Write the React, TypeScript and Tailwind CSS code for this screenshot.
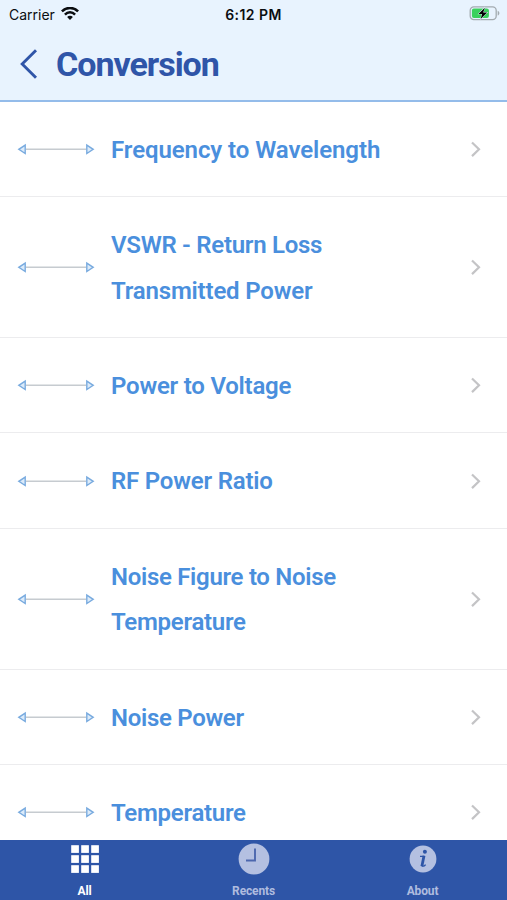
import React from 'react';

type ConversionItem = {
  lines: { text: string; tracking: string }[];
};

const items: ConversionItem[] = [
  { lines: [{ text: 'Frequency to Wavelength', tracking: 'tracking-[-0.08px]' }] },
  {
    lines: [
      { text: 'VSWR - Return Loss', tracking: 'tracking-[-0.28px]' },
      { text: 'Transmitted Power', tracking: 'tracking-[-0.18px]' }
    ]
  },
  { lines: [{ text: 'Power to Voltage', tracking: 'tracking-[-0.22px]' }] },
  { lines: [{ text: 'RF Power Ratio', tracking: 'tracking-[-0.2px]' }] },
  {
    lines: [
      { text: 'Noise Figure to Noise', tracking: 'tracking-[-0.3px]' },
      { text: 'Temperature', tracking: 'tracking-[-0.28px]' }
    ]
  },
  { lines: [{ text: 'Noise Power', tracking: 'tracking-[-0.3px]' }] },
  { lines: [{ text: 'Temperature', tracking: 'tracking-[-0.28px]' }] }
];

const WifiIcon = () => (
  <svg width="18" height="14" viewBox="0 0 18 14" fill="none" stroke="#0b0d10" strokeWidth="2.5">
    <path d="M.9 4.4C5.4 -.2 12.6 -.2 17.1 4.4" />
    <path d="M3.9 7.6C6.8 4.6 11.2 4.6 14.1 7.6" />
    <path d="M9 12.9L6.1 10C7.7 8.4 10.3 8.4 11.9 10Z" fill="#0b0d10" stroke="none" />
  </svg>
);

const BatteryIcon = () => (
  <svg width="31" height="15" viewBox="0 0 31 15" fill="none">
    <rect x="1.2" y=".8" width="26" height="12.8" rx="3.6" stroke="#a3abb0" strokeWidth="1.3" />
    <path d="M28.7 4.8v4.8c2.2-.7 2.2-4.1 0-4.8Z" fill="#a3abb0" />
    <rect x="2.9" y="2.4" width="17" height="9.6" rx="2" fill="#3ad15c" />
    <path d="M16 .6L8.6 8.2h4l-1.6 5.9 8.2-8h-4.3Z" fill="#e8f3fe" />
    <path d="M15.8 1.8L9.4 7.9h3.7l-1.5 5.1 6.6-6.6h-4Z" fill="#000" />
  </svg>
);

const ArrowIcon = () => (
  <svg className="shrink-0" width="78" height="12" viewBox="0 0 78 12" fill="none">
    <path d="M9 6.3H69" stroke="#c6cbd0" strokeWidth="1.5" />
    <path d="M8.2 2.1V10.5L1.8 6.3Z" fill="#dcebfa" stroke="#79abdf" strokeWidth="1.4" />
    <path d="M69.8 2.1V10.5L76.2 6.3Z" fill="#dcebfa" stroke="#79abdf" strokeWidth="1.4" />
  </svg>
);

const tabs = [
  {
    name: 'All',
    color: 'text-white',
    icon: (
      <svg width="28" height="28" viewBox="0 0 28 28" fill="#fff">
        {[0, 10, 20].map(y =>
          [0, 10, 20].map(x => <rect key={`${x}-${y}`} x={x + 0.2} y={y + 0.2} width="7.7" height="7.7" />)
        )}
      </svg>
    )
  },
  {
    name: 'Recents',
    color: 'text-[#afbcdf]',
    icon: (
      <svg width="32" height="32" viewBox="0 0 32 32" fill="none">
        <circle cx="16" cy="16" r="15.4" fill="#b4c0e1" />
        <path d="M17 5.5V17.5H8" stroke="#4c67ae" strokeWidth="1.9" />
      </svg>
    )
  },
  {
    name: 'About',
    color: 'text-[#afbcdf]',
    icon: (
      <svg width="28" height="28" viewBox="0 0 28 28" fill="none">
        <circle cx="14" cy="14" r="13.4" fill="#b4c0e1" />
        <circle cx="15.9" cy="6.8" r="2" fill="#2e55a7" />
        <path d="M11 11.4H15.5M12.8 20.9C14 21.4 15.6 20.9 16.6 19.6" stroke="#2e55a7" strokeWidth="1.4" />
        <path d="M15 10.8L12.9 21.2" stroke="#2e55a7" strokeWidth="2.8" />
      </svg>
    )
  }
];

const App: React.FC = () => {
  return (
    <div className="flex h-[900px] w-[507px] flex-col overflow-hidden bg-white font-['Roboto',sans-serif]">
      <header className="h-[102px] shrink-0 border-b-2 border-[#94bcea] bg-[#e8f3fe]">
        <div className="grid h-7 grid-cols-3 items-center px-[9px] font-['Inter',sans-serif] text-[14px] text-[#0b0d10]">
          <div className="flex items-center gap-[6px]">
            <span>Carrier</span>
            <WifiIcon />
          </div>
          <span className="text-center font-semibold tracking-[0.45px]">6:12 PM</span>
          <div className="-mr-[2px] flex justify-end pb-px">
            <BatteryIcon />
          </div>
        </div>
        <div className="flex h-[72px] items-center pl-5">
          <svg width="18" height="30" viewBox="0 0 18 30" fill="none" stroke="#2f55a8" strokeWidth="2.9">
            <path d="M16 1.3L2.2 15L16 28.7" />
          </svg>
          <h1 className="ml-[18px] text-[34px] font-bold leading-none tracking-[-1.02px] text-[#2f55a8]">Conversion</h1>
        </div>
      </header>

      <main className="min-h-0 flex-1 overflow-hidden">
        {items.map((item, index) => (
          <div key={index} className="flex items-center border-b border-[#ececee] py-[24.35px] pl-[17px] pr-[25px]">
            <ArrowIcon />
            <div className="-mb-[1.7px] ml-4 flex-1 pt-[1.7px] text-[24px] font-semibold leading-[45.6px] text-[#4a8fdd]">
              {item.lines.map(line => (
                <p key={line.text}>
                  <span className={line.tracking}>{line.text}</span>
                </p>
              ))}
            </div>
            <svg width="12" height="16" viewBox="0 0 12 16" fill="none" stroke="#c4c4c6" strokeWidth="2.2">
              <path d="M2 1.5L9 8.3L2 15.1" />
            </svg>
          </div>
        ))}
      </main>

      <nav className="grid h-[60px] shrink-0 grid-cols-3 bg-[#2e55a7]">
        {tabs.map(tab => (
          <div key={tab.name} className={`flex flex-col items-center ${tab.color}`}>
            <div className="flex h-[38px] items-center">{tab.icon}</div>
            <span className="mt-[5px] text-[12px] font-bold leading-4 tracking-[-0.15px]">{tab.name}</span>
          </div>
        ))}
      </nav>
    </div>
  );
};

export default App;
